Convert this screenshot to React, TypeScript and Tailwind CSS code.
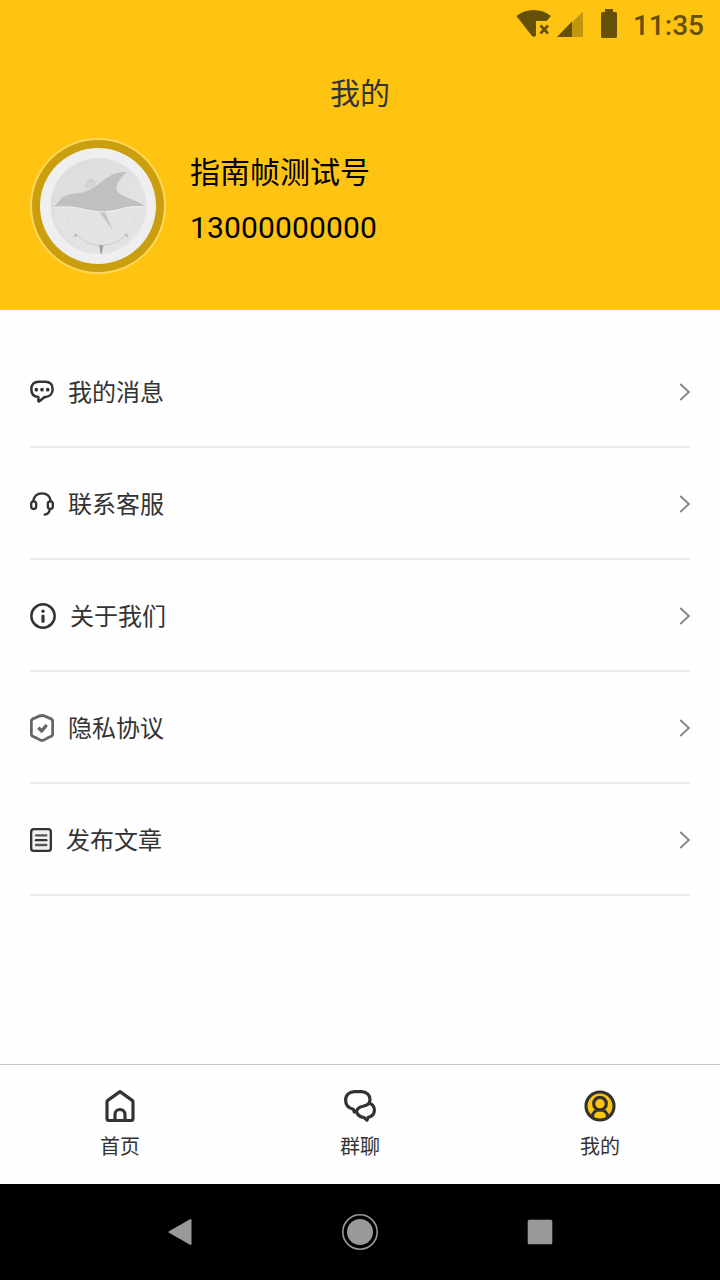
import { useState, type ReactNode } from "react";

function MessageIcon() {
  return (
    <svg viewBox="0 0 72 72" className="h-6 w-6" fill="none" stroke="#333" strokeWidth="7.5" strokeLinejoin="round">
      <path d="M26 5h20c14 0 22 9 22 22S60 50 47 51h-3L28 63.500c-2 1.500-3 1-3-1V51C12 50 4 41 4 27.500S12 5 26 5Z" />
      <g fill="#333" stroke="none">
        <circle cx="19" cy="29" r="5.500" />
        <circle cx="36" cy="29" r="5.500" />
        <circle cx="53" cy="29" r="5.500" />
      </g>
    </svg>
  );
}

function HeadsetIcon() {
  return (
    <svg viewBox="0 0 72 72" className="h-6 w-6" fill="none" stroke="#333" strokeWidth="7" strokeLinecap="round">
      <path d="M9 28C12 12 22 4 36 4s24 8 27 24M60 52c-2 9-7 15-16 16" />
      <rect x="3.500" y="28" width="15" height="23" rx="7.5" />
      <rect x="53.500" y="28" width="15" height="23" rx="7.5" />
    </svg>
  );
}

function InfoIcon() {
  return (
    <svg viewBox="0 0 78 78" className="h-[26px] w-[26px]" fill="none" stroke="#333" strokeWidth="7.5">
      <circle cx="39" cy="39" r="35" />
      <circle cx="39" cy="24.500" r="5" fill="#333" stroke="none" />
      <path d="M39 39v16" strokeWidth="9.5" strokeLinecap="round" />
    </svg>
  );
}

function ShieldIcon() {
  return (
    <svg viewBox="0 0 72 84" className="h-7 w-6" fill="none" stroke="#666" strokeWidth="8.5" strokeLinejoin="round">
      <path d="M36 4.500c7 0 14 4 22 8 7 2 10 4 10 9v39c0 4-2 6-8 8-9 3-16 11-24 11s-15-8-24-11c-6-2-8-4-8-8v-39c0-5 3-7 10-9 8-4 15-8 22-8Z" />
      <path d="M25 41l10 10 15-18" strokeWidth="10" />
    </svg>
  );
}

function ArticleIcon() {
  return (
    <svg viewBox="0 0 66 72" className="h-6 w-[22px]" fill="none" stroke="#333" strokeWidth="7" strokeLinecap="round">
      <rect x="3.500" y="3.500" width="59" height="65" rx="8" fill="#f2f2f2" />
      <path d="M18 22h31M18 51h31" stroke="#555" />
      <path d="M18 36.500h31" />
    </svg>
  );
}

function HomeIcon() {
  return (
    <svg viewBox="0 0 32 34" className="h-[34px] w-8" fill="none" stroke="#333" strokeWidth="3.2" strokeLinejoin="round">
      <path d="M16 2.600 3.800 11.400a2 2 0 0 0-.8 1.600v16.500a2 2 0 0 0 2 2h22a2 2 0 0 0 2-2V13a2 2 0 0 0-.8-1.600Z" />
      <path d="M11 31v-5.500a5 5 0 0 1 10 0V31" />
    </svg>
  );
}

function ChatIcon() {
  return (
    <svg viewBox="0 0 32 34" className="h-[34px] w-8" fill="none" stroke="#333" strokeWidth="3.2" strokeLinejoin="round">
      <path d="M10.500 2.600h7c5 0 8.500 3.500 8.500 8 0 1.500-.5 2.800-1.300 4-1.500 1.700-3.500 2.200-5.700 2.700-3 .6-5.500 2.200-6.500 4.700L10.300 23l-1-2.800C4.300 19.200 1.600 15.700 1.600 11c0-5 3.900-8.400 8.900-8.400Z" />
      <path d="M25.300 14.200c3.400 1.200 5.100 3.800 5.100 6.800 0 3.800-2.500 6.600-6.100 7.300l-1.400 2.900-2.900-2.700c-3.700-.4-6.600-2.600-7.500-6" />
    </svg>
  );
}

function ProfileIcon() {
  return (
    <svg viewBox="0 0 32 34" className="h-[34px] w-8" fill="none" stroke="#333" strokeWidth="3.2">
      <circle cx="16" cy="17" r="14" fill="#ffc412" />
      <circle cx="16" cy="14.700" r="6.300" />
      <path d="M8.300 28.500c0-4.700 3.200-7.500 7.700-7.500s7.700 2.800 7.700 7.500" />
    </svg>
  );
}

function Avatar() {
  return (
    <svg viewBox="0 0 136 136" className="h-[136px] w-[136px] shrink-0">
      <defs>
        <linearGradient id="disc" x1="0" y1="0" x2="1" y2="1">
          <stop offset="0" stopColor="#dcdcdc" />
          <stop offset="1" stopColor="#e6e6e6" />
        </linearGradient>
        <linearGradient id="fin" x1="0" y1="0" x2="0" y2="1">
          <stop offset="0" stopColor="#cecece" />
          <stop offset="1" stopColor="#dedede" />
        </linearGradient>
      </defs>
      <circle cx="68" cy="68" r="68" fill="#ffd75c" />
      <circle cx="68" cy="68" r="66" fill="#cb9e0e" />
      <circle cx="68" cy="68" r="58" fill="#efefef" />
      <circle cx="68.500" cy="68" r="48" fill="url(#disc)" />
      <g transform="translate(-10 -8) scale(.33333)">
        <path d="M190 187c2-24 10-40 22-40 9 0 15 8 18 16l-20 26Z" fill="url(#fin)" />
        <path d="M102 234c25-5 58-3 85 4 50 14 115 11 150-7 20-6 35-3 42 1-5 48-52 138-136 138-70 0-130-59-141-136Z" fill="#e3e3e3" />
        <path d="M140 245c5 63 49 101 104 101 57 0 99-39 105-104" fill="none" stroke="#d6d6d6" strokeWidth="1.500" />
        <path d="M168 310c20 24 47 36 76 36 31 0 56-12 76-35" fill="none" stroke="#c4c4c4" strokeWidth="2" />
        <path d="M236 243h18l25 60Z" fill="#c6c6c6" />
        <path d="M101 231c6-5 12-12 19-20 9-13 24-18 48-21 45-3 65-26 91-46 20-14 40-19 63-18-17 14-35 35-33 52 4 15 25 21 49 31 17 7 30 14 39 21-27-5-55-1-81 7-34 10-76 7-107-1-32-8-62-9-88-5Z" fill="#c0c0c0" />
        <path d="M101 233c27-4 57-3 89 5 31 8 73 11 107 1 26-8 54-12 81-7" fill="none" stroke="#eee" strokeWidth="3" />
        <path d="M238 346h12l-5 26h-3ZM160 322l8-10 4 4ZM327 325l-12-11 4-3Z" fill="#9d9d9d" />
      </g>
    </svg>
  );
}

function StatusBar() {
  return (
    <div className="flex h-12 items-center justify-end pr-4 text-[#665008]">
      <svg viewBox="0 0 104 32" className="mr-[13px] h-8 w-[104px]" fill="currentColor">
        <path d="M0.400 8C5 4 11 2 17.700 2s12.700 2 17.200 6l-4.200 5H20v14.500c-1.500 1.800-3 1.800-4.400 0Z" />
        <path d="m24.500 17.500 7.500 8m0-8-7.500 8" stroke="currentColor" strokeWidth="2.700" />
        <path d="M67 3.500V29H41Z" fill="#c1970f" />
        <path d="M56 13.500V29H41Z" />
        <path d="M89 1h8v3h2.500a1.500 1.500 0 0 1 1.500 1.500v23a1.500 1.500 0 0 1-1.500 1.500h-13a1.500 1.500 0 0 1-1.500-1.500v-23A1.500 1.500 0 0 1 86.500 4H89Z" />
      </svg>
      <span className="pt-1 font-['Roboto',sans-serif] text-[28px] leading-none font-medium">11:35</span>
    </div>
  );
}

const menu: { label: string; icon: ReactNode }[] = [
  { label: "我的消息", icon: <MessageIcon /> },
  { label: "联系客服", icon: <HeadsetIcon /> },
  { label: "关于我们", icon: <InfoIcon /> },
  { label: "隐私协议", icon: <ShieldIcon /> },
  { label: "发布文章", icon: <ArticleIcon /> },
];

const tabs: { label: string; icon: ReactNode }[] = [
  { label: "首页", icon: <HomeIcon /> },
  { label: "群聊", icon: <ChatIcon /> },
  { label: "我的", icon: <ProfileIcon /> },
];

export default function App() {
  const [tab, setTab] = useState("我的");

  return (
    <div className="flex h-[1280px] w-[720px] flex-col bg-[#fefefe] font-['Roboto','Noto_Sans_CJK_SC',sans-serif] text-[#333]">
      <header className="h-[310px] bg-[#ffc412]">
        <StatusBar />
        <h1 className="h-[90px] text-center text-[30px] leading-[92px]">我的</h1>
        <div className="flex px-[30px]">
          <Avatar />
          <div className="ml-6 pt-[7px] text-[30px] text-black">
            <p className="h-[55px] leading-[55px]">指南帧测试号</p>
            <p className="h-[55px] leading-[55px] tracking-[0.13px]">13000000000</p>
          </div>
        </div>
      </header>

      <main className="flex-1 px-[30px] pt-[26px]">
        {menu.map(item => (
          <button key={item.label} type="button" className="flex h-28 w-full items-center border-b-2 border-[#ebebeb] pt-0.5">
            {item.icon}
            <span className="ml-3.5 pt-0.5 text-2xl">{item.label}</span>
            <svg viewBox="0 0 12 18" className="ml-auto h-[18px] w-3" fill="none" stroke="#888" strokeWidth="1.900">
              <path d="m2.300 1 8.500 8-8.500 8" />
            </svg>
          </button>
        ))}
      </main>

      <nav className="grid h-[120px] grid-cols-3 border-t border-[#c8c8c8]">
        {tabs.map(item => (
          <button
            key={item.label}
            type="button"
            aria-pressed={tab === item.label}
            onClick={() => setTab(item.label)}
            className="flex flex-col items-center pt-6"
          >
            {item.icon}
            <span className="mt-[9px] text-xl leading-[30px]">{item.label}</span>
          </button>
        ))}
      </nav>

      <footer className="flex h-24 items-center justify-center bg-black">
        <svg viewBox="0 0 420 40" className="h-10 w-[420px]" fill="#999">
          <path d="M40.500 8v24L19.500 20Z" stroke="#999" strokeWidth="2" strokeLinejoin="round" />
          <circle cx="210" cy="20" r="13" />
          <circle cx="210" cy="20" r="17.200" fill="none" stroke="#999" strokeWidth="1.600" />
          <rect x="377.700" y="7.700" width="24.600" height="24.600" rx="1.500" />
        </svg>
      </footer>
    </div>
  );
}
